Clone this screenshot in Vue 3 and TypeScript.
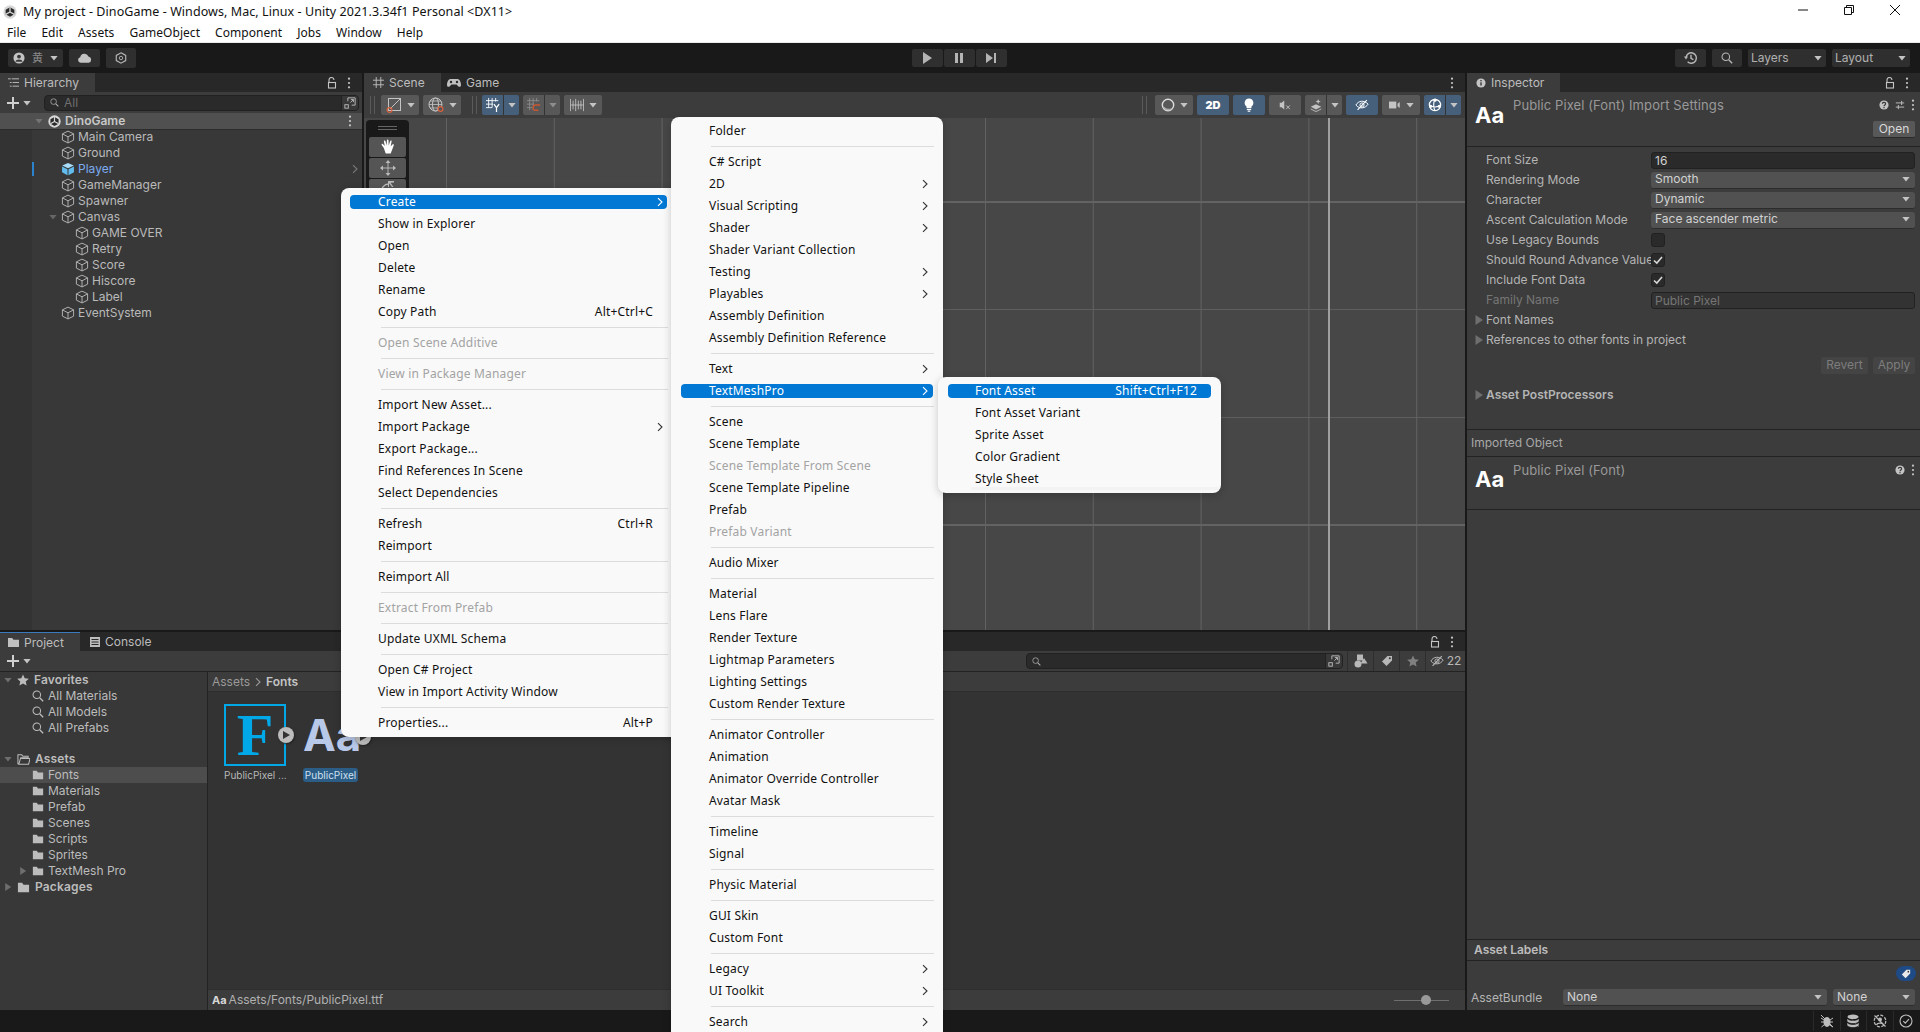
<script setup lang="ts">
interface MenuItem {
  label?: string
  key?: string
  sub?: boolean
  off?: boolean
  on?: boolean
  sep?: boolean
}

interface TreeItem {
  name: string
  depth: number
  open?: boolean
  prefab?: boolean
}

const sep: MenuItem = { sep: true }
const m = (label: string, extra: MenuItem = {}): MenuItem => ({ label, ...extra })

const projectMenu: MenuItem[] = [
  m('Create', { on: true, sub: true }),
  m('Show in Explorer'), m('Open'), m('Delete'), m('Rename'),
  m('Copy Path', { key: 'Alt+Ctrl+C' }),
  sep, m('Open Scene Additive', { off: true }),
  sep, m('View in Package Manager', { off: true }),
  sep, m('Import New Asset...'), m('Import Package', { sub: true }), m('Export Package...'),
  m('Find References In Scene'), m('Select Dependencies'),
  sep, m('Refresh', { key: 'Ctrl+R' }), m('Reimport'),
  sep, m('Reimport All'),
  sep, m('Extract From Prefab', { off: true }),
  sep, m('Update UXML Schema'),
  sep, m('Open C# Project'), m('View in Import Activity Window'),
  sep, m('Properties...', { key: 'Alt+P' }),
]

const createMenu: MenuItem[] = [
  m('Folder'),
  sep, m('C# Script'), m('2D', { sub: true }), m('Visual Scripting', { sub: true }), m('Shader', { sub: true }),
  m('Shader Variant Collection'), m('Testing', { sub: true }), m('Playables', { sub: true }),
  m('Assembly Definition'), m('Assembly Definition Reference'),
  sep, m('Text', { sub: true }), m('TextMeshPro', { on: true, sub: true }),
  sep, m('Scene'), m('Scene Template'), m('Scene Template From Scene', { off: true }),
  m('Scene Template Pipeline'), m('Prefab'), m('Prefab Variant', { off: true }),
  sep, m('Audio Mixer'),
  sep, m('Material'), m('Lens Flare'), m('Render Texture'), m('Lightmap Parameters'),
  m('Lighting Settings'), m('Custom Render Texture'),
  sep, m('Animator Controller'), m('Animation'), m('Animator Override Controller'), m('Avatar Mask'),
  sep, m('Timeline'), m('Signal'),
  sep, m('Physic Material'),
  sep, m('GUI Skin'), m('Custom Font'),
  sep, m('Legacy', { sub: true }), m('UI Toolkit', { sub: true }),
  sep, m('Search', { sub: true }),
]

const tmpMenu: MenuItem[] = [
  m('Font Asset', { on: true, key: 'Shift+Ctrl+F12' }),
  m('Font Asset Variant'), m('Sprite Asset'), m('Color Gradient'), m('Style Sheet'),
]

const menus = [
  { id: 'ctx-project', items: projectMenu },
  { id: 'ctx-create', items: createMenu },
  { id: 'ctx-tmp', items: tmpMenu },
]

const tree: TreeItem[] = [
  { name: 'Main Camera', depth: 1 },
  { name: 'Ground', depth: 1 },
  { name: 'Player', depth: 1, prefab: true },
  { name: 'GameManager', depth: 1 },
  { name: 'Spawner', depth: 1 },
  { name: 'Canvas', depth: 1, open: true },
  { name: 'GAME OVER', depth: 2 },
  { name: 'Retry', depth: 2 },
  { name: 'Score', depth: 2 },
  { name: 'Hiscore', depth: 2 },
  { name: 'Label', depth: 2 },
  { name: 'EventSystem', depth: 1 },
]

const menuBar = ['File', 'Edit', 'Assets', 'GameObject', 'Component', 'Jobs', 'Window', 'Help']
const favorites = ['All Materials', 'All Models', 'All Prefabs']
const folders = ['Fonts', 'Materials', 'Prefab', 'Scenes', 'Scripts', 'Sprites', 'TextMesh Pro']
</script>

<template>
  <div class="app">
    <!-- shared icons -->
    <svg class="sprite" width="0" height="0">
      <symbol id="i-cube" viewBox="0 0 16 16"><path d="M8 1.3 14.4 4.4v7.2L8 14.8 1.6 11.6V4.4ZM1.6 4.4 8 7.8l6.4-3.4M8 7.8v7" fill="none" stroke="currentColor" stroke-width="1.1" /></symbol>
      <symbol id="i-cube-fill" viewBox="0 0 16 16"><path d="M8 1 14.6 4 8 7.2 1.4 4Z" fill="#a8dcf8" /><path d="M1.2 5 7.4 8.2V15L1.2 11.8Z" fill="#62bdee" /><path d="M14.8 5 8.6 8.2V15l6.2-3.2Z" fill="#62bdee" /></symbol>
      <symbol id="i-unity" viewBox="0 0 16 16"><circle cx="8" cy="8" r="7.6" fill="#d8d8d8" /><path d="M8 2.5 13 5.3v5.4L8 13.5 3 10.7V5.3Z" fill="#2b2b2b" /><path d="M8 8V2.5M8 8l-5 2.7M8 8l5 2.7" stroke="#d8d8d8" stroke-width="1.5" /></symbol>
      <symbol id="i-down" viewBox="0 0 10 10"><path d="M.5 2.5h9L5 8Z" fill="currentColor" /></symbol>
      <symbol id="i-right" viewBox="0 0 10 10"><path d="M1.5 0 9 5 1.5 10Z" fill="currentColor" /></symbol>
      <symbol id="i-chev" viewBox="0 0 10 10"><path d="M3 1.2 7 5 3 8.8" fill="none" stroke="currentColor" stroke-width="1.1" /></symbol>
      <symbol id="i-dots" viewBox="0 0 4 14"><circle cx="2" cy="2" r="1.3" fill="currentColor" /><circle cx="2" cy="7" r="1.3" fill="currentColor" /><circle cx="2" cy="12" r="1.3" fill="currentColor" /></symbol>
      <symbol id="i-lock" viewBox="0 0 10 12"><path d="M2 5V3a2.5 2.5 0 0 1 5 0" fill="none" stroke="currentColor" stroke-width="1.1" /><rect x="1.5" y="5.5" width="7" height="5.5" fill="none" stroke="currentColor" stroke-width="1.1" /></symbol>
      <symbol id="i-plus" viewBox="0 0 12 12"><path d="M6 0v12M0 6h12" stroke="currentColor" stroke-width="2" /></symbol>
      <symbol id="i-search" viewBox="0 0 14 14"><circle cx="5.6" cy="5.6" r="4.4" fill="none" stroke="currentColor" stroke-width="1.2" /><path d="m9 9 4 4" stroke="currentColor" stroke-width="1.6" /></symbol>
      <symbol id="i-expand" viewBox="0 0 14 14"><path d="M4.5 5V1H13v8.5H9M7.5 6.5 11 3M8 3h3v3" fill="none" stroke="currentColor" /><rect x="1" y="9" width="4" height="4" fill="none" stroke="currentColor" /></symbol>
      <symbol id="i-folder" viewBox="0 0 14 12"><path d="M1 1h4.5L7 3h6v8H1Z" fill="currentColor" /></symbol>
      <symbol id="i-folder-open" viewBox="0 0 14 12"><path d="M1 11V1h4l1.500 1.500H12V4H4L2 11h10.500L14 5H4.500" fill="none" stroke="currentColor" stroke-width="1.1" /></symbol>
      <symbol id="i-star" viewBox="0 0 14 14"><path d="m7 .6 2 4.400 4.800.5-3.600 3.200 1 4.700L7 11l-4.200 2.400 1-4.700L.2 5.500 5 5Z" fill="currentColor" /></symbol>
      <symbol id="i-hier" viewBox="0 0 12 10"><path d="M0 1h3M4 1h8M2 5h2M5 5h7M2 9h2M5 9h7" stroke="currentColor" /></symbol>
      <symbol id="i-grid" viewBox="0 0 12 12"><path d="M3.5 0v12M8.5 0v12M0 3.5h12M0 8.5h12" stroke="currentColor" /></symbol>
      <symbol id="i-pad" viewBox="0 0 14 10"><path d="M3.5 1h7C12.5 1 14 4 14 7c0 2-2 2.500-3 1L9.500 6.500h-5L3 8C2 9.500 0 9 0 7c0-3 1.500-6 3.500-6Z" fill="currentColor" /><circle cx="4" cy="4" r="1.2" fill="#282828" /><circle cx="10" cy="4" r="1.2" fill="#282828" /></symbol>
      <symbol id="i-info" viewBox="0 0 12 12"><circle cx="6" cy="6" r="5.5" fill="currentColor" /><path d="M6 5.200V9M6 2.500v1.400" stroke="#282828" stroke-width="1.5" /></symbol>
      <symbol id="i-help" viewBox="0 0 12 12"><circle cx="6" cy="6" r="5.5" fill="currentColor" /><path d="M4 4.600c0-2.400 4-2.400 4 0C8 6 6 6 6 7.500M6 8.500V10" fill="none" stroke="#333" stroke-width="1.3" /></symbol>
      <symbol id="i-sliders" viewBox="0 0 12 12"><path d="M1 3.500h10M1 8.500h10M8 1v5M4 6v5" stroke="currentColor" stroke-width="1.1" /></symbol>
      <symbol id="i-console" viewBox="0 0 10 10"><rect width="10" height="10" fill="currentColor" /><path d="M1.500 2.500h7M1.500 5h7M1.500 7.500h7" stroke="#282828" /></symbol>
      <symbol id="i-eye-off" viewBox="0 0 16 12"><path d="M1 6c3-5 9-6 14-1-3 5-10 6-14 1Z" fill="none" stroke="currentColor" stroke-width="1.1" /><circle cx="8" cy="6" r="2.4" fill="none" stroke="currentColor" stroke-width="1.1" /><path d="M3 11.500 13.500.5" stroke="currentColor" stroke-width="1.3" /></symbol>
      <symbol id="i-tag" viewBox="0 0 12 12"><path d="M1 6.500 6.500 1H11v4.500L5.500 11Z" fill="currentColor" /><circle cx="8.800" cy="3.200" r="1" fill="#333" /></symbol>
      <symbol id="i-shapes" viewBox="0 0 14 14"><rect x="3" y=".5" width="6" height="6" fill="currentColor" /><circle cx="4" cy="10" r="3.5" fill="currentColor" /><path d="m10 4 3.500 5.500h-7Z" fill="currentColor" /></symbol>
      <symbol id="i-corner" viewBox="0 0 16 16"><rect x="2.5" y="1.5" width="12" height="12" fill="none" stroke="currentColor" /><path d="M14 2 4 12" stroke="currentColor" /><circle cx="3.5" cy="13" r="2.4" fill="none" stroke="#d9603c" stroke-width="1.2" /></symbol>
      <symbol id="i-globe" viewBox="0 0 16 16"><circle cx="7.5" cy="7.5" r="6.5" fill="none" stroke="currentColor" /><ellipse cx="7.5" cy="7.5" rx="3" ry="6.5" fill="none" stroke="currentColor" /><path d="M1 7.500h13M2 4h11M2 11h11" stroke="currentColor" stroke-width=".8" /><circle cx="12.5" cy="12" r="2.4" fill="#555" stroke="#d9603c" stroke-width="1.2" /></symbol>
      <symbol id="i-snap" viewBox="0 0 16 16"><path d="M3 0v11M7 0v11M11 0v4M0 3h14M0 7h8M0 11h7" stroke="currentColor" /><path d="M9 7l3 4 3-4M12 11v5" fill="none" stroke="currentColor" stroke-width="1.4" /></symbol>
      <symbol id="i-snap-off" viewBox="0 0 16 16"><path d="M3 0v14M7 0v14M11 0v4M0 3h14M0 7h8M0 11h6" stroke="currentColor" /><path d="M15 8H10a3 3 0 0 0 0 6h3" fill="none" stroke="#c9552f" stroke-width="1.5" /></symbol>
      <symbol id="i-ruler" viewBox="0 0 16 14"><path d="M.5 0v14M15.500 0v14M.5 7h15M3.500 2v10M6.500 0v14M9.500 2v10M12.500 2v10" fill="none" stroke="currentColor" /></symbol>
      <symbol id="i-shade" viewBox="0 0 16 16"><circle cx="8" cy="8" r="6.5" fill="none" stroke="#ddd" stroke-width="1.6" /><path d="M2.500 9a6 6 0 0 0 11 2.500c-3 1.500-8 1-11-2.500Z" fill="#aaa" /></symbol>
      <symbol id="i-bulb" viewBox="0 0 12 16"><path d="M6 .5a5 5 0 0 1 2.800 9.100V11.500H3.200V9.600A5 5 0 0 1 6 .5Z" fill="currentColor" /><path d="M3.500 13h5M4.500 15h3" stroke="currentColor" stroke-width="1.3" /></symbol>
      <symbol id="i-mute" viewBox="0 0 16 14"><path d="M1 4h2.500L7 1v12L3.500 10H1Z" fill="currentColor" /><path d="m9.500 7.500 5 5M14.500 7.500l-5 5" stroke="currentColor" stroke-width="1.2" /></symbol>
      <symbol id="i-layers" viewBox="0 0 16 16"><path d="M8 7 14 10 8 13 2 10Z" fill="currentColor" /><path d="M2 12.500 8 15.500l6-3" fill="none" stroke="currentColor" /><path d="M10.500 1l.8 2.200 2.200.8-2.200.8-.8 2.200-.8-2.200-2.200-.8 2.200-.8Z" fill="currentColor" /></symbol>
      <symbol id="i-cam" viewBox="0 0 14 10"><rect y="1" width="8.5" height="8" fill="currentColor" /><path d="M10 3.500 12.500 1.500v7L10 6.500Z" fill="currentColor" /></symbol>
      <symbol id="i-gizmo" viewBox="0 0 16 16"><circle cx="8" cy="8" r="6.5" fill="none" stroke="currentColor" stroke-width="1.3" /><path d="M1.500 8c3 3 10 3 13 0M8 1.500C6 5 6 11 8 14.500" fill="none" stroke="currentColor" stroke-width="1.3" /><circle cx="8" cy="2.5" r="1.8" fill="currentColor" /><circle cx="3" cy="9.5" r="1.8" fill="currentColor" /><circle cx="13" cy="9.5" r="1.8" fill="currentColor" /></symbol>
      <symbol id="i-hand" viewBox="0 0 16 16"><path d="M3.800 9 1.800 6.200c-.8-1 .5-1.900 1.300-1L4.800 7 3.900 2.600c-.2-1.100 1.300-1.400 1.600-.3L6.700 6.400 6.900 1.300c0-1.200 1.500-1.200 1.600 0l.2 5.100 1.400-4.200c.4-1.100 1.800-.7 1.500.4L10.600 7.500l1.800-2c.8-.9 2 0 1.300 1L10.700 14.500H5.700Z" fill="currentColor" /></symbol>
      <symbol id="i-move" viewBox="0 0 16 16"><path d="M8 2v12M2 8h12" stroke="currentColor" stroke-width=".9" /><path d="M8 0l2.400 3H5.600ZM8 16l2.400-3H5.600ZM0 8l3-2.400v4.800ZM16 8l-3-2.400v4.800Z" fill="currentColor" /></symbol>
      <symbol id="i-rotate" viewBox="0 0 16 16"><path d="M2 12A7 7 0 0 1 9 3" fill="none" stroke="currentColor" stroke-width="1.3" /><path d="M8 0h6v1.400L10.500 1.800 13.500 6H12L9 2.200V6H8Z" fill="currentColor" /></symbol>
      <symbol id="i-history" viewBox="0 0 14 14"><path d="M2 7a5.200 5.200 0 1 1 1.600 3.800M7 3.800V7.400l2.400 1.200" fill="none" stroke="currentColor" stroke-width="1.4" /><path d="M0 5.500h4L2 8.500Z" fill="currentColor" /></symbol>
      <symbol id="i-cloud" viewBox="0 0 16 10"><path d="M4 10a3 3 0 0 1-.6-5.900 4.600 4.600 0 0 1 8.800-.6A3.300 3.300 0 0 1 12.500 10Z" fill="currentColor" /></symbol>
      <symbol id="i-hex" viewBox="0 0 14 14"><path d="M7 1 12.500 4v6L7 13 1.500 10V4Z" fill="none" stroke="currentColor" stroke-width="1.3" /><circle cx="7" cy="7" r="2" fill="none" stroke="currentColor" /></symbol>
      <symbol id="i-user" viewBox="0 0 14 14"><circle cx="7" cy="7" r="6.5" fill="currentColor" /><circle cx="7" cy="5.3" r="2.2" fill="#383838" /><path d="M2.800 11.500c.8-3.500 7.600-3.500 8.400 0Z" fill="#383838" /></symbol>
      <symbol id="i-bug" viewBox="0 0 14 14"><ellipse cx="7" cy="8" rx="3.5" ry="5" fill="currentColor" /><path d="M1 4l3 2M13 4l-3 2M1 8h3M10 8h3M1.500 13l3-2.500M12.500 13l-3-2.500M1 1l12 12" stroke="currentColor" /></symbol>
      <symbol id="i-db" viewBox="0 0 14 14"><ellipse cx="7" cy="2.8" rx="5.5" ry="2.3" fill="currentColor" /><path d="M1.500 5.200c1 2.400 10 2.400 11 0v2c-1 2.400-10 2.400-11 0ZM1.500 9.200c1 2.400 10 2.400 11 0v2c-1 2.400-10 2.400-11 0ZM2 1l11 12" fill="currentColor" stroke="currentColor" stroke-width=".4" /></symbol>
      <symbol id="i-net" viewBox="0 0 14 14"><circle cx="7" cy="7" r="5.8" fill="none" stroke="currentColor" stroke-dasharray="3 1.5" stroke-width="1.2" /><circle cx="7" cy="5.5" r="2" fill="currentColor" /><path d="M3.500 11c.8-2.500 6.200-2.500 7 0M1.500 1.500l11 11" stroke="currentColor" stroke-width="1.2" fill="none" /></symbol>
      <symbol id="i-check-c" viewBox="0 0 14 14"><circle cx="7" cy="7" r="6" fill="none" stroke="currentColor" stroke-width="1.1" /><path d="m4.300 7.200 2 2 3.600-4" fill="none" stroke="currentColor" stroke-width="1.2" /></symbol>
      <symbol id="i-check" viewBox="0 0 12 12"><path d="m2 6.500 2.800 2.600L10 3" fill="none" stroke="currentColor" stroke-width="1.6" /></symbol>
    </svg>

    <header class="titlebar">
      <svg class="title-icon"><use href="#i-unity" /></svg>
      <span class="title-text">My project - DinoGame - Windows, Mac, Linux - Unity 2021.3.34f1 Personal &lt;DX11&gt;</span>
      <div class="win-controls">
        <svg width="12" height="12" viewBox="0 0 12 12"><path d="M1 6h10" stroke="#111" /></svg>
        <svg width="12" height="12" viewBox="0 0 12 12"><path d="M1.500 3.500h7v7h-7ZM3.500 3.500v-2h7v7h-2" fill="none" stroke="#111" /></svg>
        <svg width="12" height="12" viewBox="0 0 12 12"><path d="m1 1 10 10M11 1 1 11" stroke="#111" /></svg>
      </div>
    </header>
    <nav class="menubar">
      <span v-for="name in menuBar" :key="name">{{ name }}</span>
    </nav>

    <div class="toolbar">
      <div class="tb-left">
        <div class="tb-btn account">
          <svg class="ic12"><use href="#i-user" /></svg>
          <span class="cjk">黄</span>
          <svg class="ic8"><use href="#i-down" /></svg>
        </div>
        <div class="tb-btn cloud"><svg class="cloud-ic"><use href="#i-cloud" /></svg></div>
        <div class="tb-btn collab"><svg class="ic12"><use href="#i-hex" /></svg></div>
      </div>
      <div class="tb-play">
        <div class="tb-btn play"><svg width="10" height="12" viewBox="0 0 10 12"><path d="M1 0 10 6 1 12Z" fill="#b4b4b4" /></svg></div>
        <div class="tb-btn play"><svg width="10" height="12" viewBox="0 0 10 12"><path d="M1 1h3v10H1ZM6 1h3v10H6Z" fill="#b4b4b4" /></svg></div>
        <div class="tb-btn play"><svg width="10" height="12" viewBox="0 0 10 12"><path d="M0 1 7 6 0 11ZM8 1h2v10H8Z" fill="#b4b4b4" /></svg></div>
      </div>
      <div class="tb-right">
        <div class="tb-btn icon-btn"><svg class="ic14"><use href="#i-history" /></svg></div>
        <div class="tb-btn icon-btn narrow"><svg class="ic12"><use href="#i-search" /></svg></div>
        <div class="tb-btn select">Layers<svg class="ic8"><use href="#i-down" /></svg></div>
        <div class="tb-btn select">Layout<svg class="ic8"><use href="#i-down" /></svg></div>
      </div>
    </div>

    <div class="workspace">
      <div class="main-col">
        <div class="top-row">
          <section class="hierarchy">
            <div class="tabbar">
              <div class="tab hier-tab"><svg class="ic-tab"><use href="#i-hier" /></svg><span>Hierarchy</span></div>
              <div class="tab-tools">
                <svg class="ic-lock"><use href="#i-lock" /></svg>
                <svg class="ic-dots"><use href="#i-dots" /></svg>
              </div>
            </div>
            <div class="subbar">
              <svg class="ic-plus"><use href="#i-plus" /></svg>
              <svg class="ic8 plus-arrow"><use href="#i-down" /></svg>
              <div class="searchbox hier-search">
                <svg class="ic-find"><use href="#i-search" /></svg>
                <span class="find-hint">All</span>
                <div class="search-end"><svg class="ic12"><use href="#i-expand" /></svg></div>
              </div>
            </div>
            <div class="tree">
              <div class="tree-head">
                <svg class="ic8 head-caret"><use href="#i-down" /></svg>
                <svg class="ic13"><use href="#i-unity" /></svg>
                <b>DinoGame</b>
                <svg class="ic-dots head-dots"><use href="#i-dots" /></svg>
              </div>
              <div
                v-for="row in tree"
                :key="row.name"
                class="tree-row"
                :class="{ prefab: row.prefab }"
                :style="{ paddingLeft: 47 + row.depth * 14 - 14 + 'px' }"
              >
                <span class="caret-slot"><svg v-if="row.open" class="ic8"><use href="#i-down" /></svg></span>
                <svg class="ic14 cube"><use :href="row.prefab ? '#i-cube-fill' : '#i-cube'" /></svg>
                <span>{{ row.name }}</span>
                <svg v-if="row.prefab" class="ic10 row-chev"><use href="#i-chev" /></svg>
              </div>
            </div>
          </section>

          <section class="scene">
            <div class="tabbar">
              <div class="tab scene-tab"><svg class="ic-tab"><use href="#i-grid" /></svg><span>Scene</span></div>
              <div class="tab idle"><svg class="ic-pad"><use href="#i-pad" /></svg><span>Game</span></div>
              <div class="tab-tools"><svg class="ic-dots"><use href="#i-dots" /></svg></div>
            </div>
            <div class="scene-bar">
              <i class="grip" />
              <div class="sbtn"><svg class="ic16"><use href="#i-corner" /></svg><svg class="ic8"><use href="#i-down" /></svg></div>
              <div class="sbtn"><svg class="ic16"><use href="#i-globe" /></svg><svg class="ic8"><use href="#i-down" /></svg></div>
              <i class="grip mid" />
              <div class="sbtn split blue"><span class="cell"><svg class="ic14 bright"><use href="#i-snap" /></svg></span><span class="cell arrow"><svg class="ic8"><use href="#i-down" /></svg></span></div>
              <div class="sbtn split dim"><span class="cell"><svg class="ic14"><use href="#i-snap-off" /></svg></span><span class="cell arrow"><svg class="ic8"><use href="#i-down" /></svg></span></div>
              <div class="sbtn"><svg class="ic14"><use href="#i-ruler" /></svg><svg class="ic8"><use href="#i-down" /></svg></div>

              <i class="grip push" />
              <div class="sbtn"><svg class="ic14"><use href="#i-shade" /></svg><svg class="ic8"><use href="#i-down" /></svg></div>
              <div class="sbtn small blue"><b>2D</b></div>
              <div class="sbtn small blue"><svg class="ic14 bright"><use href="#i-bulb" /></svg></div>
              <div class="sbtn small"><svg class="ic12"><use href="#i-mute" /></svg></div>
              <div class="sbtn split"><span class="cell"><svg class="ic14"><use href="#i-layers" /></svg></span><span class="cell arrow"><svg class="ic8"><use href="#i-down" /></svg></span></div>
              <div class="sbtn small blue"><svg class="ic14 bright"><use href="#i-eye-off" /></svg></div>
              <div class="sbtn"><svg class="ic12"><use href="#i-cam" /></svg><svg class="ic8"><use href="#i-down" /></svg></div>
              <div class="sbtn split blue"><span class="cell"><svg class="ic14 bright"><use href="#i-gizmo" /></svg></span><span class="cell arrow"><svg class="ic8"><use href="#i-down" /></svg></span></div>
            </div>
            <div class="scene-view">
              <div class="tools">
                <div class="tools-grip" />
                <div class="tool"><svg class="ic16 bright"><use href="#i-hand" /></svg></div>
                <div class="tool"><svg class="ic16"><use href="#i-move" /></svg></div>
                <div class="tool"><svg class="ic16"><use href="#i-rotate" /></svg></div>
              </div>
            </div>
          </section>
        </div>

        <section class="project">
          <div class="tabbar">
            <div class="tab project-tab"><svg class="ic-tab-f"><use href="#i-folder" /></svg><span>Project</span></div>
            <div class="tab idle console-tab"><svg class="ic10"><use href="#i-console" /></svg><span>Console</span></div>
            <div class="tab-tools">
              <svg class="ic-lock"><use href="#i-lock" /></svg>
              <svg class="ic-dots"><use href="#i-dots" /></svg>
            </div>
          </div>
          <div class="subbar project-bar">
            <svg class="ic-plus"><use href="#i-plus" /></svg>
            <svg class="ic8 plus-arrow"><use href="#i-down" /></svg>
            <div class="searchbox proj-search">
              <svg class="ic-find"><use href="#i-search" /></svg>
              <div class="search-end"><svg class="ic12"><use href="#i-expand" /></svg></div>
            </div>
            <div class="filter"><svg class="ic14"><use href="#i-shapes" /></svg></div>
            <div class="filter"><svg class="ic12"><use href="#i-tag" /></svg></div>
            <div class="filter"><svg class="ic12 dimmer"><use href="#i-star" /></svg></div>
            <div class="filter last"><svg class="ic14"><use href="#i-eye-off" /></svg><span>22</span></div>
          </div>
          <div class="project-body">
            <aside class="folders">
              <div class="ftree bold"><svg class="ic8 caret-dim"><use href="#i-down" /></svg><svg class="ic12"><use href="#i-star" /></svg>Favorites</div>
              <div v-for="f in favorites" :key="f" class="ftree lv1"><svg class="ic12"><use href="#i-search" /></svg>{{ f }}</div>
              <div class="ftree bold group-gap"><svg class="ic8 caret-dim"><use href="#i-down" /></svg><svg class="ic13"><use href="#i-folder-open" /></svg>Assets</div>
              <div v-for="f in folders" :key="f" class="ftree lv1" :class="{ active: f === 'Fonts' }">
                <svg v-if="f === 'TextMesh Pro'" class="ic8 caret-dim lv1-caret"><use href="#i-right" /></svg>
                <svg class="ic12"><use href="#i-folder" /></svg>{{ f }}
              </div>
              <div class="ftree bold"><svg class="ic8 caret-dim"><use href="#i-right" /></svg><svg class="ic13"><use href="#i-folder" /></svg>Packages</div>
            </aside>
            <div class="browser">
              <div class="crumbs"><span>Assets</span><svg class="ic10"><use href="#i-chev" /></svg><b>Fonts</b></div>
              <div class="assets">
                <div class="asset">
                  <div class="f-thumb">F</div>
                  <span class="badge"><svg width="8" height="8" viewBox="0 0 8 8"><path d="M1 0 8 4 1 8Z" fill="#333" /></svg></span>
                  <div class="asset-name">PublicPixel ...</div>
                </div>
                <div class="asset aa-asset">
                  <div class="aa-thumb">Aa</div>
                  <span class="badge"><svg width="8" height="8" viewBox="0 0 8 8"><path d="M1 0 8 4 1 8Z" fill="#333" /></svg></span>
                  <div class="asset-name picked">PublicPixel</div>
                </div>
              </div>
              <div class="pathbar">
                <b>Aa</b><span>Assets/Fonts/PublicPixel.ttf</span>
                <div class="zoom-slider"><i /></div>
              </div>
            </div>
          </div>
        </section>
      </div>

      <section class="inspector">
        <div class="tabbar">
          <div class="tab ins-tab"><svg class="ic10"><use href="#i-info" /></svg><span>Inspector</span></div>
          <div class="tab-tools">
            <svg class="ic-lock"><use href="#i-lock" /></svg>
            <svg class="ic-dots"><use href="#i-dots" /></svg>
          </div>
        </div>
        <div class="ins-head">
          <div class="aa-big">Aa</div>
          <div class="ins-title">Public Pixel (Font) Import Settings</div>
          <div class="ins-actions">
            <div class="ins-icons">
              <svg class="ic10"><use href="#i-help" /></svg>
              <svg class="ic10"><use href="#i-sliders" /></svg>
              <svg class="ic-dots"><use href="#i-dots" /></svg>
            </div>
            <div class="open-btn">Open</div>
          </div>
        </div>
        <div class="props">
          <div class="prop"><label>Font Size</label><div class="field">16</div></div>
          <div class="prop"><label>Rendering Mode</label><div class="drop">Smooth<svg class="ic8"><use href="#i-down" /></svg></div></div>
          <div class="prop"><label>Character</label><div class="drop">Dynamic<svg class="ic8"><use href="#i-down" /></svg></div></div>
          <div class="prop"><label>Ascent Calculation Mode</label><div class="drop">Face ascender metric<svg class="ic8"><use href="#i-down" /></svg></div></div>
          <div class="prop"><label>Use Legacy Bounds</label><div class="check" /></div>
          <div class="prop"><label>Should Round Advance Value</label><div class="check"><svg class="ic12"><use href="#i-check" /></svg></div></div>
          <div class="prop"><label>Include Font Data</label><div class="check"><svg class="ic12"><use href="#i-check" /></svg></div></div>
          <div class="prop off"><label>Family Name</label><div class="field">Public Pixel</div></div>
          <div class="fold"><svg class="ic10"><use href="#i-right" /></svg>Font Names</div>
          <div class="fold"><svg class="ic10"><use href="#i-right" /></svg>References to other fonts in project</div>
          <div class="revert-row"><span class="off-btn">Revert</span><span class="off-btn apply">Apply</span></div>
          <div class="fold post"><svg class="ic10"><use href="#i-right" /></svg><b>Asset PostProcessors</b></div>
        </div>
        <div class="imported">Imported Object</div>
        <div class="ins-head second">
          <div class="aa-big">Aa</div>
          <div class="ins-title">Public Pixel (Font)</div>
          <div class="ins-icons">
            <svg class="ic10"><use href="#i-help" /></svg>
            <svg class="ic-dots"><use href="#i-dots" /></svg>
          </div>
        </div>
        <div class="ins-fill" />
        <div class="labels-head">Asset Labels</div>
        <div class="labels-body">
          <div class="tag-pill"><svg class="ic10"><use href="#i-tag" /></svg></div>
          <div class="bundle-row">
            <label>AssetBundle</label>
            <div class="drop wide">None<svg class="ic8"><use href="#i-down" /></svg></div>
            <div class="drop thin">None<svg class="ic8"><use href="#i-down" /></svg></div>
          </div>
        </div>
      </section>
    </div>

    <footer class="statusbar">
      <span><svg class="ic14"><use href="#i-bug" /></svg></span>
      <span><svg class="ic14"><use href="#i-db" /></svg></span>
      <span><svg class="ic14"><use href="#i-net" /></svg></span>
      <span><svg class="ic14"><use href="#i-check-c" /></svg></span>
    </footer>

    <!-- context menus -->
    <div v-for="menu in menus" :key="menu.id" class="ctx" :class="menu.id">
      <template v-for="(item, i) in menu.items" :key="i">
        <div v-if="item.sep" class="ctx-sep" />
        <div v-else class="ctx-row" :class="{ on: item.on, off: item.off }">
          <span>{{ item.label }}</span>
          <span v-if="item.key" class="ctx-key">{{ item.key }}</span>
          <svg v-if="item.sub" class="ctx-chev"><use href="#i-chev" /></svg>
        </div>
      </template>
    </div>
  </div>
</template>

<style>
html, body { margin: 0; background: #191919; }
</style>

<style scoped>
.app {
  position: relative;
  width: 1920px;
  height: 1032px;
  overflow: hidden;
  display: flex;
  flex-direction: column;
  background: #191919;
  color: #c4c4c4;
  font: 12px/16px Inter, "Noto Sans CJK SC", sans-serif;
}
.sprite { position: absolute; }
svg { display: block; flex: none; }
.ic8 { width: 8px; height: 8px; color: #c4c4c4; }
.ic10 { width: 10px; height: 10px; }
.ic12 { width: 12px; height: 12px; }
.ic13 { width: 13px; height: 13px; }
.ic14 { width: 14px; height: 14px; }
.ic16 { width: 16px; height: 16px; }
.bright { color: #fff; }

/* window chrome */
.titlebar {
  height: 20px;
  flex: none;
  display: flex;
  align-items: center;
  background: #fff;
  color: #111;
  font: 12.5px/20px "Noto Sans", sans-serif;
  letter-spacing: 0.07px;
}
.title-icon { width: 14px; height: 14px; margin: 4px 6px 0 3px; }
.title-text { padding-top: 4px; }
.win-controls { margin-left: auto; margin-right: 19px; display: flex; gap: 34px; }
.menubar {
  height: 23px;
  flex: none;
  display: flex;
  align-items: center;
  gap: 15px;
  padding: 3px 0 0 7px;
  box-sizing: border-box;
  background: #fff;
  color: #111;
  border-bottom: 1px solid #eaeaea;
  font: 12px/18px "Noto Sans", sans-serif;
  letter-spacing: 0.05px;
}

/* top toolbar */
.toolbar {
  height: 30px;
  flex: none;
  display: grid;
  grid-template-columns: 1fr auto 1fr;
  align-items: center;
  padding: 0 10px 0 8px;
  background: #191919;
}
.tb-left, .tb-play, .tb-right { display: flex; align-items: center; }
.tb-left { gap: 6px; }
.tb-play { gap: 1px; }
.tb-right { gap: 6px; justify-content: flex-end; }
.tb-btn {
  height: 18px;
  display: flex;
  align-items: center;
  justify-content: center;
  background: #2f2f2f;
  border-radius: 2px;
}
.account { width: 55px; gap: 7px; }
.cjk { color: #8a8a8a; font-size: 11px; }
.cloud { width: 31px; }
.cloud-ic { width: 15px; height: 10px; color: #c4c4c4; }
.collab { width: 30px; height: 20px; color: #b8b8b8; }
.account .ic12 { color: #c4c4c4; }
.play { width: 31px; }
.icon-btn { width: 31px; color: #b8b8b8; }
.icon-btn.narrow { width: 30px; }
.select {
  width: 78px;
  justify-content: space-between;
  padding: 0 4px 0 3px;
  box-sizing: border-box;
  color: #b0b0b0;
}

/* panels */
.workspace { flex: 1; min-height: 0; display: flex; gap: 2px; }
.main-col { width: 1465px; display: flex; flex-direction: column; gap: 2px; }
.top-row { height: 557px; display: flex; gap: 2px; flex: none; }
.tabbar {
  height: 19px;
  flex: none;
  display: flex;
  background: #282828;
}
.tab {
  display: flex;
  align-items: center;
  gap: 5px;
  background: #3c3c3c;
  color: #bcbcbc;
  box-sizing: border-box;
}
.tab span { padding-top: 1px; }
.tab.idle { background: none; }
.tab-tools { margin-left: auto; display: flex; align-items: center; gap: 10px; padding-right: 11px; color: #c4c4c4; }
.ic-lock { width: 10px; height: 12px; }
.ic-dots { width: 4px; height: 12px; }
.ic-tab { width: 11px; height: 11px; color: #c0c0c0; }
.ic-tab-f { width: 13px; height: 11px; color: #c0c0c0; }
.ic-pad { width: 14px; height: 10px; color: #c0c0c0; }
.hier-tab { width: 95px; padding-left: 8px; }
.subbar {
  height: 21px;
  flex: none;
  display: flex;
  align-items: center;
  padding-left: 7px;
  background: #3c3c3c;
  box-sizing: border-box;
}
.ic-plus { width: 12px; height: 12px; color: #d0d0d0; }
.plus-arrow { margin-left: 4px; }
.searchbox {
  height: 16px;
  display: flex;
  align-items: center;
  background: #2a2a2a;
  border: 1px solid #212121;
  border-radius: 4px;
  box-sizing: border-box;
}
.search-end {
  margin-left: auto;
  width: 16px;
  height: 100%;
  display: flex;
  align-items: center;
  justify-content: center;
  background: #383838;
  color: #c4c4c4;
  border-left: 1px solid #212121;
  border-radius: 0 3px 3px 0;
}
.hier-search { width: 315px; margin-left: 13px; }
.ic-find { width: 9px; height: 9px; margin-left: 5px; color: #b0b0b0; }
.find-hint { margin-left: 5px; color: #6f6f6f; }

/* hierarchy */
.hierarchy { width: 362px; display: flex; flex-direction: column; }
.tree {
  flex: 1;
  background: linear-gradient(90deg, #333 32px, #383838 32px);
}
.tree-head {
  position: relative;
  height: 16px;
  display: flex;
  align-items: center;
  padding-left: 35px;
  background: #505050;
  color: #c8c8c8;
  border-bottom: 1px solid #2c2c2c;
  margin-bottom: -1px;
}
.tree-head b { font-weight: 600; margin-left: 4px; }
.head-caret { color: #747474; margin-right: 5px; }
.head-dots { position: absolute; right: 10px; top: 2px; }
.tree-row {
  position: relative;
  height: 16px;
  display: flex;
  align-items: center;
  color: #bababa;
}
.caret-slot { width: 14px; flex: none; }
.caret-slot .ic8 { color: #666; margin-left: 2px; }
.cube { color: #b4b4b4; margin-right: 3px; }
.prefab { color: #7babf0; }
.prefab::before {
  content: "";
  position: absolute;
  left: 32px;
  top: 1px;
  bottom: 1px;
  width: 2px;
  background: #2a83cc;
}
.row-chev { position: absolute; right: 2px; top: 3px; color: #7a7a7a; }

/* scene */
.scene { flex: 1; min-width: 0; display: flex; flex-direction: column; }
.scene-tab { width: 77px; padding-left: 9px; }
.scene .idle { padding-left: 6px; }
.scene-bar {
  height: 26px;
  flex: none;
  display: flex;
  align-items: center;
  gap: 4px;
  padding: 0 4px 0 6px;
  box-sizing: border-box;
  background: #3c3c3c;
}
.grip { width: 3px; height: 18px; border-left: 1px solid #5a5a5a; border-right: 1px solid #5a5a5a; margin-right: 2px; }
.grip.mid { margin: 0 1px 0 7px; }
.grip.push { margin-left: auto; margin-right: 4px; }
.sbtn {
  width: 38px;
  height: 20px;
  display: flex;
  align-items: center;
  justify-content: center;
  gap: 5px;
  background: #585858;
  color: #c4c4c4;
  border-radius: 2px;
  font: 700 11px/20px Inter, sans-serif;
}
.sbtn.small { width: 32px; }
.sbtn.blue { background: #46607c; color: #fff; }
.sbtn.split { width: 37px; gap: 0; align-items: stretch; }
.cell { flex: 1; display: flex; align-items: center; justify-content: center; }
.cell.arrow { flex: 0 0 15px; border-left: 1px solid #333; }
.sbtn.dim { color: #8d8d8d; }
.sbtn.dim .ic8 { color: #8d8d8d; }
.scene-view {
  position: relative;
  flex: 1;
  background-color: #474747;
  background-image:
    linear-gradient(#a0a0a0, #a0a0a0),
    linear-gradient(#636363, #636363),
    linear-gradient(#636363, #636363),
    linear-gradient(90deg, #626262 1px, transparent 1px),
    linear-gradient(#5e5e5e 1px, transparent 1px);
  background-size: 2px 100%, 100% 2px, 100% 2px, 107.8px 100%, 100% 108px;
  background-position: 964px 0, 0 83px, 0 406px, 82px 0, 0 83px;
  background-repeat: no-repeat, no-repeat, no-repeat, repeat-x, repeat-y;
}
.tools {
  position: absolute;
  left: 2px;
  top: 2px;
  width: 43px;
  padding: 0 3px;
  box-sizing: border-box;
  height: 120px;
  background: #191919;
  border-radius: 4px 4px 0 0;
}
.tools-grip {
  height: 17px;
  margin: 0 9px;
  background:
    linear-gradient(#666, #666) 0 6px / 100% 1px no-repeat,
    linear-gradient(#666, #666) 0 9px / 100% 1px no-repeat;
}
.tool {
  height: 20px;
  margin-bottom: 1px;
  display: flex;
  align-items: center;
  justify-content: center;
  background: #555;
  color: #bcbcbc;
  border-radius: 2px;
}

/* project */
.project { flex: 1; display: flex; flex-direction: column; min-height: 0; }
.project-tab {
  width: 80px;
  padding-left: 7px;
  gap: 4px;
  border-top: 1px solid #3a79bb;
}
.console-tab { padding-left: 10px; }
.project-bar { border-bottom: 1px solid #232323; }
.proj-search { width: 317px; margin-left: auto; margin-right: 4px; }
.filter {
  width: 26px;
  height: 20px;
  display: flex;
  align-items: center;
  justify-content: center;
  gap: 3px;
  box-sizing: border-box;
  color: #b8b8b8;
  border-left: 1px solid #2e2e2e;
}
.filter.last { width: 40px; }
.dimmer { color: #808080; }
.project-body { flex: 1; display: flex; min-height: 0; }
.folders {
  width: 207px;
  flex: none;
  background: #383838;
  border-right: 1px solid #232323;
}
.ftree {
  position: relative;
  height: 16px;
  display: flex;
  align-items: center;
  gap: 4px;
  color: #bcbcbc;
}
.bold { font-weight: 600; padding-left: 4px; letter-spacing: 0.15px; }
.bold svg + svg { margin-right: 1px; }
.lv1 { padding-left: 32px; }
.group-gap { margin-top: 15px; }
.caret-dim { color: #6e6e6e; margin-right: 1px; }
.lv1-caret { position: absolute; left: 19px; top: 4px; }
.active { background: #4d4d4d; }
.browser { flex: 1; min-width: 0; display: flex; flex-direction: column; background: #383838; }
.crumbs {
  height: 20px;
  flex: none;
  display: flex;
  align-items: center;
  gap: 3px;
  padding-left: 4px;
  background: #3c3c3c;
  color: #9a9a9a;
  border-bottom: 1px solid #2e2e2e;
  box-sizing: border-box;
}
.crumbs b { color: #c4c4c4; font-weight: 600; }
.assets {
  flex: 1;
  display: flex;
  gap: 17px;
  padding: 12px 0 0 16px;
  background: #333;
}
.asset { position: relative; width: 62px; }
.aa-asset { width: 55px; }
.f-thumb {
  height: 62px;
  box-sizing: border-box;
  border: 2px solid #00a8e8;
  color: #00a8e8;
  font: 700 60px/58px "Liberation Serif", serif;
  text-align: center;
}
.aa-thumb {
  height: 62px;
  color: #b8c8e8;
  font: 700 44px/62px Inter, sans-serif;
}
.badge {
  position: absolute;
  left: 54px;
  top: 23px;
  width: 16px;
  height: 16px;
  display: flex;
  align-items: center;
  justify-content: center;
  border-radius: 50%;
  background: #bdbdbd;
  box-shadow: 1px 1px 2px #222;
}
.aa-asset .badge { left: 52px; top: 25px; }
.asset-name {
  margin-top: 2px;
  height: 14px;
  text-align: center;
  font-size: 10px;
  line-height: 14px;
  color: #b8b8b8;
  white-space: nowrap;
}
.picked { background: #2c5d87; color: #cfe0f0; border-radius: 3px; }
.pathbar {
  position: relative;
  height: 21px;
  flex: none;
  display: flex;
  align-items: center;
  gap: 2px;
  padding-left: 4px;
  background: #3c3c3c;
  border-top: 1px solid #2e2e2e;
  box-sizing: border-box;
  color: #b0b0b0;
}
.pathbar b { color: #d8d8d8; font-weight: 700; font-size: 11px; }
.zoom-slider {
  position: absolute;
  right: 16px;
  top: 10px;
  width: 55px;
  height: 1px;
  background: #6e6e6e;
}
.zoom-slider i {
  position: absolute;
  left: 27px;
  top: -5px;
  width: 10px;
  height: 10px;
  border-radius: 50%;
  background: #999;
}

/* inspector */
.inspector { flex: 1; min-width: 0; display: flex; flex-direction: column; background: #3c3c3c; }
.ins-tab { width: 93px; padding-left: 9px; }
.ins-tab .ic10 { color: #c4c4c4; }
.ins-head {
  height: 55px;
  flex: none;
  display: flex;
  box-sizing: border-box;
  border-bottom: 1px solid #232323;
}
.aa-big {
  width: 46px;
  flex: none;
  padding: 9px 0 0 8px;
  box-sizing: border-box;
  color: #fff;
  font: 700 22px/28px Inter, sans-serif;
}
.second .aa-big { padding-top: 8px; }
.ins-title { padding-top: 5px; color: #999; font-size: 13px; line-height: 16px; letter-spacing: 0.1px; }
.ins-actions { margin-left: auto; padding-right: 5px; display: flex; flex-direction: column; align-items: flex-end; gap: 11px; }
.ins-icons { margin-left: auto; display: flex; align-items: center; gap: 6px; padding: 8px 5px 0 0; color: #c4c4c4; height: 10px; }
.ins-actions .ins-icons { padding-right: 0; }
.open-btn {
  width: 42px;
  height: 17px;
  box-sizing: border-box;
  background: #585858;
  border-radius: 2px;
  border-bottom: 1px solid #2a2a2a;
  text-align: center;
  color: #d8d8d8;
  line-height: 16px;
}
.props { flex: none; padding-top: 3px; height: 283px; box-sizing: border-box; border-bottom: 1px solid #232323; }
.prop {
  height: 20px;
  display: flex;
  align-items: center;
  padding-left: 19px;
}
.prop label {
  width: 165px;
  flex: none;
  padding-right: 2px;
  box-sizing: border-box;
  overflow: hidden;
  white-space: nowrap;
  color: #b4b4b4;
}
.field {
  width: 264px;
  height: 17px;
  box-sizing: border-box;
  padding-left: 3px;
  background: #2a2a2a;
  border: 1px solid #212121;
  border-radius: 3px;
  color: #d2d2d2;
  line-height: 15px;
}
.drop {
  width: 264px;
  height: 17px;
  box-sizing: border-box;
  display: flex;
  align-items: center;
  justify-content: space-between;
  padding: 0 5px 1px 4px;
  background: #515151;
  border-radius: 3px;
  border-bottom: 1px solid #2c2c2c;
  color: #d2d2d2;
}
.check {
  width: 14px;
  height: 14px;
  display: flex;
  align-items: center;
  justify-content: center;
  background: #2a2a2a;
  border: 1px solid #212121;
  border-radius: 3px;
  box-sizing: border-box;
  color: #d8d8d8;
}
.off label { color: #767676; }
.off .field { color: #767676; background: #333; }
.fold {
  height: 20px;
  display: flex;
  align-items: center;
  gap: 2px;
  padding-left: 7px;
  color: #b4b4b4;
}
.fold .ic10 { color: #6e6e6e; }
.fold b { font-weight: 600; }
.post { margin-top: 11px; }
.revert-row { display: flex; justify-content: flex-end; gap: 5px; padding: 7px 5px 0 0; }
.off-btn {
  width: 47px;
  height: 17px;
  background: #444;
  border-radius: 2px;
  text-align: center;
  color: #7d7d7d;
}
.off-btn.apply { width: 42px; }
.imported {
  height: 27px;
  flex: none;
  box-sizing: border-box;
  padding-left: 4px;
  line-height: 26px;
  border-bottom: 1px solid #232323;
  color: #a8a8a8;
}
.ins-head.second { height: 53px; }
.ins-fill { flex: 1; border-bottom: 1px solid #232323; }
.labels-head {
  height: 21px;
  flex: none;
  box-sizing: border-box;
  padding-left: 7px;
  line-height: 20px;
  font-weight: 600;
  color: #bcbcbc;
  border-bottom: 1px solid #232323;
}
.labels-body { height: 49px; flex: none; box-sizing: border-box; padding: 5px 4px 0; }
.tag-pill {
  width: 20px;
  height: 15px;
  margin-left: auto;
  display: flex;
  align-items: center;
  justify-content: center;
  background: #1e4a86;
  border-radius: 8px;
  color: #e8e8e8;
}
.bundle-row { margin-top: 8px; display: flex; align-items: center; }
.bundle-row label { width: 92px; color: #b4b4b4; }
.drop.wide { width: 264px; }
.drop.thin { width: 82px; margin-left: 6px; }

/* status bar */
.statusbar {
  height: 22px;
  flex: none;
  display: flex;
  justify-content: flex-end;
  align-items: center;
  padding-right: 1px;
  background: #191919;
  color: #bdbdbd;
}
.statusbar span {
  width: 26.5px;
  height: 20px;
  display: flex;
  align-items: center;
  justify-content: center;
  border-left: 1px solid #2a2a2a;
  box-sizing: border-box;
}

/* context menus */
.ctx {
  position: absolute;
  box-sizing: border-box;
  padding: 3px 0;
  background: #f9f9f9;
  border-radius: 8px;
  color: #111;
  box-shadow: 0 2px 8px rgba(0, 0, 0, 0.2);
  font: 12px/22px "Noto Sans", sans-serif;
  letter-spacing: 0.18px;
}
.ctx-project { left: 341px; top: 188px; width: 340px; height: 549px; }
.ctx-create { left: 671px; top: 117px; width: 272px; height: 930px; }
.ctx-tmp { left: 938px; top: 377px; width: 283px; }
.ctx-tmp::after {
  content: "";
  position: absolute;
  left: 33px;
  right: 2px;
  bottom: 3px;
  height: 3px;
  background: #f3f3f3;
}
.ctx-row {
  position: relative;
  height: 22px;
  display: flex;
  padding-left: 37px;
  white-space: nowrap;
}
.ctx-create .ctx-row { padding-left: 38px; }
.ctx-row > * { position: relative; }
.ctx-row.off { color: #a3a3a3; }
.ctx-row.on { color: #fff; }
.ctx-row.on::before {
  content: "";
  position: absolute;
  left: 10px;
  right: 10px;
  top: 4px;
  height: 14px;
  border-radius: 4px;
  background: #0078d4;
}
.ctx-key { position: absolute; right: 24px; }
.ctx-chev { position: absolute; right: 13px; top: 6px; width: 10px; height: 10px; color: #333; }
.ctx-row.on .ctx-chev { color: #fff; }
.ctx-sep { height: 1px; margin: 4px 9px 4px 40px; background: #dcdcdc; }
.ctx-project .ctx-row.on::before { left: 9px; right: 14px; }
.ctx-project .ctx-chev { right: 16px; }
.ctx-project .ctx-key { right: 28px; }
.ctx-project .ctx-sep { margin-right: 13px; }
</style>
